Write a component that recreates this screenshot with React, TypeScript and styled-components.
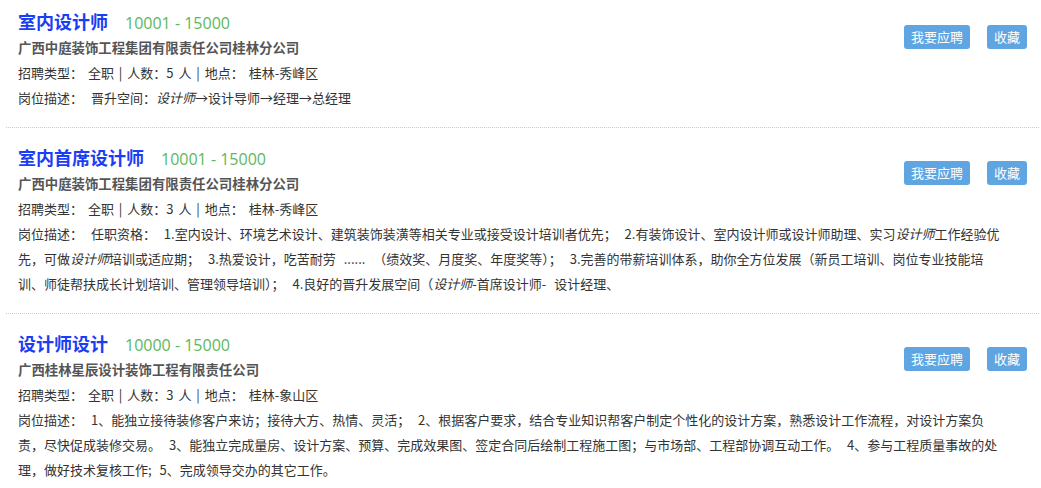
import React from "react";
import styled, { createGlobalStyle } from "styled-components";

const GlobalStyle = createGlobalStyle`
  html, body { margin: 0; padding: 0; background: #fff; }
  body {
    font-family: "Noto Sans CJK SC", "Noto Sans", sans-serif;
    font-size: 13px;
    color: #333;
  }
`;

const List = styled.div`
  margin: 0 2px 0 6px;
`;

const Item = styled.div`
  display: grid;
  grid-template-columns: 1fr auto;
  padding: 16px 12px 17px 12px;
  border-bottom: 1px dotted #c8c8c8;
  &:first-child { padding-top: 8px; }
`;

const Head = styled.div`
  display: flex;
  flex-direction: column;
`;

const TitleRow = styled.div`
  display: flex;
  align-items: baseline;
  height: 27px;
  line-height: 27px;
`;

const Title = styled.a`
  font-size: 18px;
  font-weight: bold;
  color: #1b3ef5;
  text-decoration: none;
`;

const Salary = styled.span`
  margin-left: 17px;
  font-size: 16px;
  color: #5cb85c;
  font-family: "Open Sans", "Noto Sans", sans-serif;
`;

const Company = styled.div`
  font-weight: bold;
  font-size: 13.4px;
  color: #555;
  line-height: 25px;
  height: 25px;
`;

const Line = styled.div`
  line-height: 25px;
  color: #333;
  word-spacing: 2px;
`;

const Desc = styled(Line)`
  grid-column: 1 / -1;
  padding-right: 19px;
  word-spacing: 5px;
  em { font-style: italic; }
`;

const Actions = styled.div`
  display: flex;
  gap: 17px;
  margin-top: 17px;
  align-items: flex-start;
`;

const Button = styled.button`
  height: 24px;
  padding: 0 7px;
  border: none;
  border-radius: 3px;
  background: #5ea5e2;
  color: #fff;
  font-family: inherit;
  font-size: 13px;
  line-height: 24px;
  cursor: pointer;
`;

type Job = {
  title: string;
  salary: string;
  company: string;
  count: string;
  place: string;
  desc: React.ReactNode;
};

const D = () => <em>设计师</em>;

const jobs: Job[] = [
  {
    title: "室内设计师",
    salary: "10001 - 15000",
    company: "广西中庭装饰工程集团有限责任公司桂林分公司",
    count: "5",
    place: "桂林-秀峰区",
    desc: (
      <>
        晋升空间：<D />→设计导师→经理→总经理
      </>
    ),
  },
  {
    title: "室内首席设计师",
    salary: "10001 - 15000",
    company: "广西中庭装饰工程集团有限责任公司桂林分公司",
    count: "3",
    place: "桂林-秀峰区",
    desc: (
      <>
        任职资格： 1.室内设计、环境艺术设计、建筑装饰装潢等相关专业或接受设计培训者优先； 2.有装饰设计、室内设计师或设计师助理、实习<D />工作经验优先，可做<D />培训或适应期； 3.热爱设计，吃苦耐劳 ...... （绩效奖、月度奖、年度奖等）； 3.完善的带薪培训体系，助你全方位发展（新员工培训、岗位专业技能培训、师徒帮扶成长计划培训、管理领导培训）； 4.良好的晋升发展空间（<D />-首席设计师- 设计经理、
      </>
    ),
  },
  {
    title: "设计师设计",
    salary: "10000 - 15000",
    company: "广西桂林星辰设计装饰工程有限责任公司",
    count: "3",
    place: "桂林-象山区",
    desc: (
      <>
        1、能独立接待装修客户来访；接待大方、热情、灵活； 2、根据客户要求，结合专业知识帮客户制定个性化的设计方案，熟悉设计工作流程，对设计方案负责，尽快促成装修交易。 3、能独立完成量房、设计方案、预算、完成效果图、签定合同后绘制工程施工图；与市场部、工程部协调互动工作。 4、参与工程质量事故的处理，做好技术复核工作; 5、完成领导交办的其它工作。
      </>
    ),
  },
];

export default function App() {
  return (
    <>
      <GlobalStyle />
      <List>
        {jobs.map((j, i) => (
          <Item key={i}>
            <Head>
              <TitleRow>
                <Title href="#">{j.title}</Title>
                <Salary>{j.salary}</Salary>
              </TitleRow>
              <Company>{j.company}</Company>
              <Line>
                招聘类型： 全职 | 人数：{j.count} 人 | 地点： {j.place}
              </Line>
            </Head>
            <Actions>
              <Button>我要应聘</Button>
              <Button>收藏</Button>
            </Actions>
            <Desc>岗位描述： {j.desc}</Desc>
          </Item>
        ))}
      </List>
    </>
  );
}
